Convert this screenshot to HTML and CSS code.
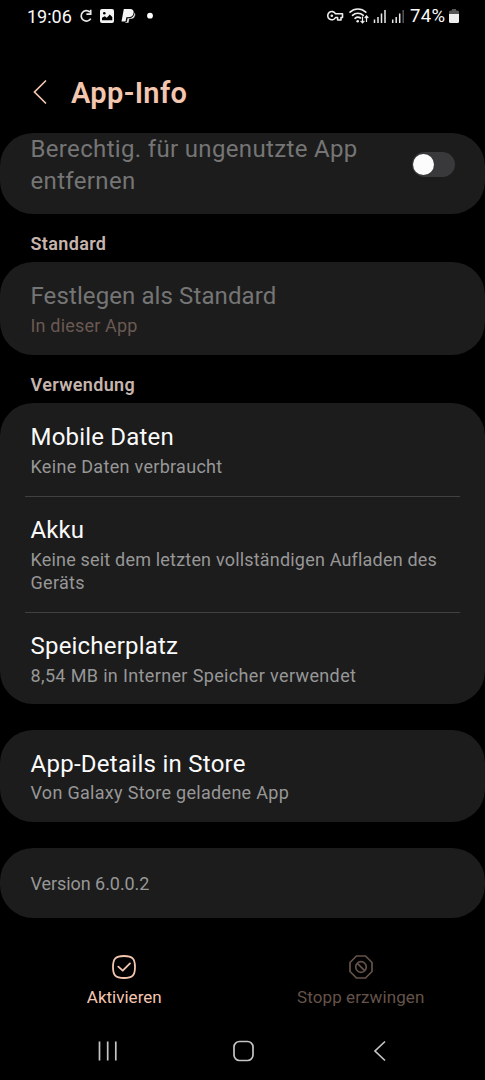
FILE: index.html
```html
<!DOCTYPE html>
<html lang="de">
<head>
<meta charset="utf-8">
<title>App-Info</title>
<link rel="stylesheet" href="styles.css">
</head>
<body>
<div class="phone">
  <div class="status">
    <span class="clock">19:06</span>
    <svg class="status-left" width="80" height="20" viewBox="0 0 80 20">
      <path d="M10.800 6A5.200 5.200 0 1 0 11.800 12.600M11.700 3.800v4.400H7.400" fill="none" stroke="#e9e9e9" stroke-width="1.700"/>
      <rect x="21" y="3" width="14" height="14" rx="2" fill="#f4f4f4"/>
      <circle cx="25.300" cy="7.300" r="1.300" fill="#000"/>
      <path d="M23 14.300v-2.500l2.800-1.600 2 1.600 3-3.200 2.500 2.400v3.300z" fill="#000"/>
      <path d="M44.800 3h5.700c3.500 0 4.600 2 4.100 4.300-.6 3-2.900 4-5.400 4h-1.800L46.600 15.500H42.500z" fill="#f4f4f4"/>
      <path d="M55.300 6.200c1 .8 1.200 1.900.9 3.200-.6 2.700-2.500 3.700-4.600 3.700h-1.200L49.700 17H45.900l.3-1.100h1.300l.9-3.900h1.500c3 0 4.900-1.700 5.400-5.800z" fill="#eee" stroke="#000" stroke-width=".5"/>
      <circle cx="71" cy="9.700" r="2.900" fill="#fff"/>
    </svg>
    <svg class="status-right" width="80" height="20" viewBox="0 0 80 20">
      <path d="M9.500 7.800A4.100 4.100 0 1 0 9.500 11.500H11.600V14H15V11.500H16.500V7.800z" fill="none" stroke="#eee" stroke-width="1.600" stroke-linejoin="round"/>
      <circle cx="5.800" cy="9.700" r="1.300" fill="#eee"/>
      <g fill="none" stroke="#eee" stroke-width="1.600" stroke-linecap="round">
        <path d="M24 6.200a11.500 11.500 0 0 1 15.800 0M26.500 9.300a8 8 0 0 1 10.800 0M29 12.300a4.500 4.500 0 0 1 5.500-.3"/>
      </g>
      <circle cx="31.700" cy="15.300" r="1.300" fill="#eee"/>
      <path d="M36.500 10.500v6M34.600 14.800l1.900 2 1.900-2M40.500 16V10.300M38.700 12l1.800-2 1.800 2" fill="none" stroke="#eee" stroke-width="1.200"/>
      <path d="M48.500 13.500V17M52 11v6M55.500 7.500V17M59 4v13M66.700 13.500V17M70.200 11v6M73.700 7.500V17" stroke="#e9e9e9" stroke-width="1.500"/>
      <path d="M77.200 4v13" stroke="#555" stroke-width="1.500"/>
    </svg>
    <span class="percent">74%</span>
    <svg class="battery" width="10" height="16" viewBox="0 0 10 16">
      <path d="M3 1h4v1.500h1.500q1.500 0 1.500 1.500V7H0V4q0-1.500 1.500-1.500H3z" fill="#555"/>
      <path d="M0 6h10v7.500q0 1.500-1.500 1.500h-7Q0 15 0 13.500z" fill="#eee"/>
    </svg>
  </div>

  <header class="header">
    <svg width="14" height="26" viewBox="0 0 14 26"><path d="M12.500 2 1.500 13 12.500 24" fill="none" stroke="#f3c6b0" stroke-width="1.700" stroke-linecap="round"/></svg>
    <h1 class="heading">App-Info</h1>
  </header>

  <main class="content">
    <section class="card card-switch">
      <div class="switch-label">Berechtig. für ungenutzte App<br>entfernen</div>
      <span class="switch"><span class="knob"></span></span>
    </section>

    <h2 class="section">Standard</h2>
    <section class="card">
      <div class="item disabled">
        <div class="title tight">Festlegen als Standard</div>
        <div class="sub">In dieser App</div>
      </div>
    </section>

    <h2 class="section">Verwendung</h2>
    <section class="card">
      <div class="item">
        <div class="title">Mobile Daten</div>
        <div class="sub">Keine Daten verbraucht</div>
      </div>
      <div class="item divided">
        <div class="title tight">Akku</div>
        <div class="sub"><span class="t-seit">Keine seit dem letzten vollständigen Aufladen des</span><br>Geräts</div>
      </div>
      <div class="item divided">
        <div class="title">Speicherplatz</div>
        <div class="sub t-wide">8,54 MB in Interner Speicher verwendet</div>
      </div>
    </section>

    <section class="card spaced">
      <div class="item">
        <div class="title t-store">App-Details in Store</div>
        <div class="sub">Von Galaxy Store geladene App</div>
      </div>
    </section>

    <section class="card spaced version"><div class="sub t-version">Version 6.0.0.2</div></section>
  </main>

  <div class="actions">
    <div class="action">
      <svg width="26" height="26" viewBox="0 0 26 26" fill="none" stroke="#f3c6b0" stroke-width="1.800" stroke-linecap="round" stroke-linejoin="round"><path d="M13 2C21.500 2 24 4.500 24 13S21.500 24 13 24 2 21.500 2 13 4.500 2 13 2z"/><path d="M7.300 12.600 11.700 16.700 19 9.400"/></svg>
      <span>Aktivieren</span>
    </div>
    <div class="action off">
      <svg width="26" height="26" viewBox="0 0 26 26" fill="none" stroke="#65534a" stroke-width="1.700" stroke-linejoin="round"><path d="M8.500 2h9L24 8.500v9L17.500 24h-9L2 17.500v-9z"/><circle cx="13" cy="13" r="5.300"/><path d="M9.300 9.300l7.400 7.400"/></svg>
      <span class="t-stop">Stopp erzwingen</span>
    </div>
  </div>

  <nav class="nav">
    <svg width="22" height="22" viewBox="0 0 22 22"><path d="M2.500 1.500v19M10.700 1.500v19M18.800 1.500v19" stroke="#c4c4c4" stroke-width="1.700"/></svg>
    <svg width="22" height="22" viewBox="0 0 22 22"><rect x="1" y="1.500" width="19" height="19" rx="5.500" fill="none" stroke="#c4c4c4" stroke-width="1.700"/></svg>
    <svg width="22" height="22" viewBox="0 0 22 22"><path d="M16 1.500 6 11l10 9.500" fill="none" stroke="#c4c4c4" stroke-width="1.700"/></svg>
  </nav>
</div>
</body>
</html>
```
FILE: styles.css
```css
* { box-sizing: border-box; }
body { margin: 0; background: #000; }
svg { display: block; flex: none; }
.phone {
  width: 485px;
  height: 1080px;
  overflow: hidden;
  display: flex;
  flex-direction: column;
  background: #000;
  color: #fafafa;
  font-family: Roboto, "Liberation Sans", sans-serif;
  white-space: nowrap;
}
.status { height: 32px; display: flex; align-items: center; padding-left: 27px; font-size: 18px; }
.clock { width: 52px; font-size: 18px; }
.status-left { margin-right: 167px; }
.percent { margin-left: 4px; width: 38px; font-size: 18.500px; letter-spacing: .4px; }
.battery { margin-left: 1px; }
.header { height: 100px; padding: 20px 0 0 33px; display: flex; align-items: center; gap: 24px; }
.heading { margin: 0; padding-top: 2px; font-size: 29px; line-height: 36px; font-weight: 600; letter-spacing: .35px; color: #f3c6b0; }
.content { display: flex; flex-direction: column; padding-top: .5px; }
.card { background: #1c1c1c; border-radius: 33px; }
.card-switch { height: 81px; padding: 0 30px 0 30.500px; display: flex; justify-content: space-between; }
.switch-label { font-size: 24px; line-height: 32px; letter-spacing: .34px; color: #757575; }
.switch { width: 43px; height: 25px; margin-top: 19px; border-radius: 13px; background: #39393b; padding: 2px 1px; }
.knob { display: block; width: 21px; height: 21px; border-radius: 50%; background: #fcfcfc; }
.section { margin: 0; height: 48.500px; padding: 17px 30.500px 0; font-size: 18px; line-height: 25px; font-weight: 600; letter-spacing: .35px; color: #c6b5ae; }
.item { margin: 0 25px; padding: 18px 5px 17.500px 5.500px; }
.divided { border-top: 1px solid #414141; padding-top: 17.500px; padding-bottom: 17px; }
.title { font-size: 24px; line-height: 32px; letter-spacing: .2px; }
.tight { letter-spacing: .1px; }
.t-store { letter-spacing: .27px; }
.sub { font-size: 18px; line-height: 23.500px; letter-spacing: .3px; color: #979797; margin-top: 1.500px; }
.t-seit { letter-spacing: .19px; }
.t-wide { letter-spacing: .36px; }
.t-version { letter-spacing: -.06px; }
.disabled .title { color: #757575; }
.disabled .sub { color: #6a5952; letter-spacing: .18px; }
.spaced { margin-top: 25.500px; }
.version { height: 70.500px; padding: 22.500px 30.500px; }
.actions { margin-top: 35.500px; display: flex; justify-content: space-between; padding: 0 6px; font-size: 17px; color: #f3c6b0; }
.action { width: 236.500px; display: flex; flex-direction: column; align-items: center; line-height: 22px; gap: 6px; }
.off { color: #65534a; }
.t-stop { letter-spacing: .1px; }
.nav { margin-top: 32px; display: flex; justify-content: space-between; padding: 0 94.500px 0 97px; }
```
